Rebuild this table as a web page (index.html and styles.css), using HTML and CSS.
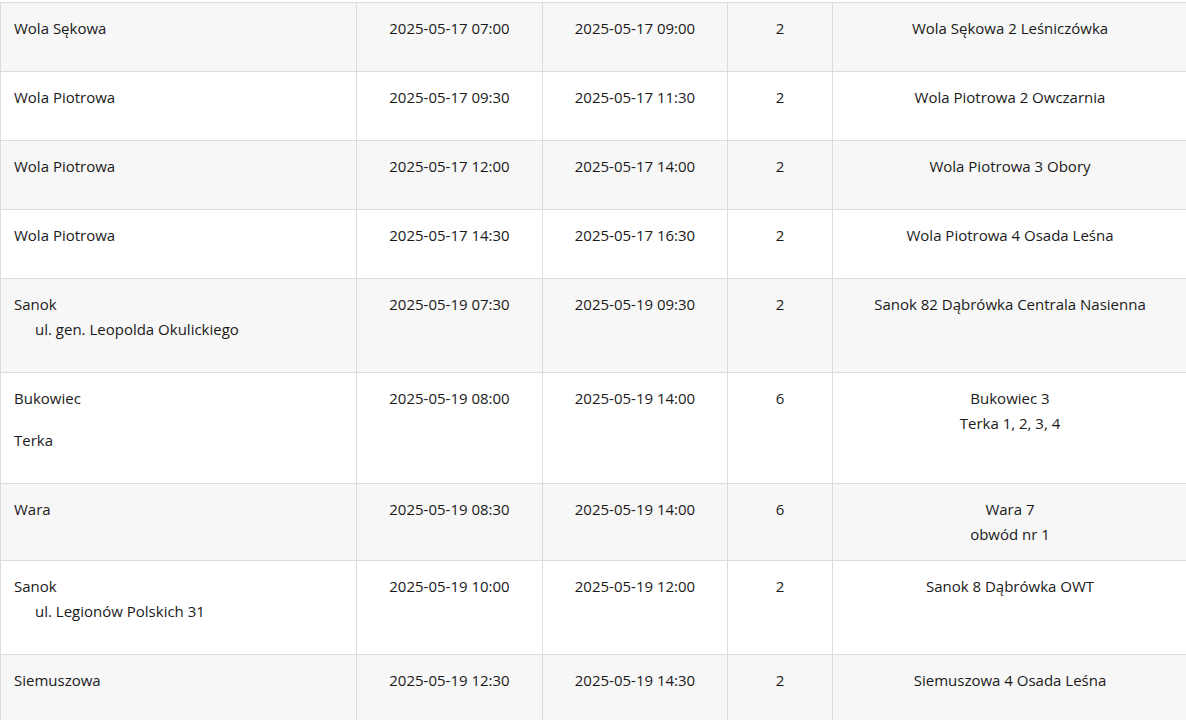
FILE: index.html
```html
<!DOCTYPE html>
<html lang="pl">
<head>
<meta charset="utf-8">
<title>Harmonogram</title>
<link rel="stylesheet" href="styles.css">
</head>
<body>
<table class="schedule">
  <colgroup>
    <col class="c-place">
    <col class="c-from">
    <col class="c-to">
    <col class="c-num">
    <col class="c-station">
  </colgroup>
  <tbody>
    <tr>
      <td class="place"><p>Wola Sękowa</p></td>
      <td>2025-05-17 07:00</td>
      <td>2025-05-17 09:00</td>
      <td>2</td>
      <td>Wola Sękowa 2 Leśniczówka</td>
    </tr>
    <tr>
      <td class="place"><p>Wola Piotrowa</p></td>
      <td>2025-05-17 09:30</td>
      <td>2025-05-17 11:30</td>
      <td>2</td>
      <td>Wola Piotrowa 2 Owczarnia</td>
    </tr>
    <tr>
      <td class="place"><p>Wola Piotrowa</p></td>
      <td>2025-05-17 12:00</td>
      <td>2025-05-17 14:00</td>
      <td>2</td>
      <td>Wola Piotrowa 3 Obory</td>
    </tr>
    <tr>
      <td class="place"><p>Wola Piotrowa</p></td>
      <td>2025-05-17 14:30</td>
      <td>2025-05-17 16:30</td>
      <td>2</td>
      <td>Wola Piotrowa 4 Osada Leśna</td>
    </tr>
    <tr>
      <td class="place"><p>Sanok<br><span class="street">ul. gen. Leopolda Okulickiego</span></p></td>
      <td>2025-05-19 07:30</td>
      <td>2025-05-19 09:30</td>
      <td>2</td>
      <td>Sanok 82 Dąbrówka Centrala Nasienna</td>
    </tr>
    <tr>
      <td class="place"><p>Bukowiec</p><p>Terka</p></td>
      <td>2025-05-19 08:00</td>
      <td>2025-05-19 14:00</td>
      <td>6</td>
      <td>Bukowiec 3<br>Terka 1, 2, 3, 4</td>
    </tr>
    <tr>
      <td class="place"><p>Wara</p></td>
      <td>2025-05-19 08:30</td>
      <td>2025-05-19 14:00</td>
      <td>6</td>
      <td>Wara 7<br>obwód nr 1</td>
    </tr>
    <tr>
      <td class="place"><p>Sanok<br><span class="street">ul. Legionów Polskich 31</span></p></td>
      <td>2025-05-19 10:00</td>
      <td>2025-05-19 12:00</td>
      <td>2</td>
      <td>Sanok 8 Dąbrówka OWT</td>
    </tr>
    <tr>
      <td class="place"><p>Siemuszowa</p></td>
      <td>2025-05-19 12:30</td>
      <td>2025-05-19 14:30</td>
      <td>2</td>
      <td>Siemuszowa 4 Osada Leśna</td>
    </tr>
  </tbody>
</table>
</body>
</html>
```

FILE: styles.css
```css
html, body {
  margin: 0;
  padding: 0;
  background: #ffffff;
}

body {
  padding-top: 2px;
  font-family: "Segoe UI", "Open Sans", "Liberation Sans", sans-serif;
  font-size: 15px;
  line-height: 25px;
  color: #1a1a1a;
  overflow: hidden;
}

.schedule {
  border-collapse: collapse;
  table-layout: fixed;
  width: 1187px;
}

.c-place { width: 356px; }
.c-from { width: 186px; }
.c-to { width: 185px; }
.c-num { width: 105px; }
.c-station { width: 355px; }

.schedule td {
  border: 1px solid #dcdcdc;
  padding: 13px 13px;
  vertical-align: top;
  text-align: center;
}

.schedule tbody tr:nth-child(odd) td {
  background: #f7f7f7;
}

.schedule td.place {
  text-align: left;
}

.place p {
  margin: 0 0 17px 0;
}

.street {
  display: inline-block;
  padding-left: 21px;
}
```
